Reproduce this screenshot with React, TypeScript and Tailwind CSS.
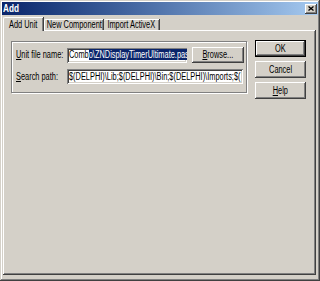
const raised =
  'shadow-[inset_-1px_-1px_#404040,inset_1px_1px_#ffffff,inset_-2px_-2px_#808080,inset_2px_2px_#d4d0c8]';
const sunken =
  'shadow-[inset_1px_1px_#808080,inset_-1px_-1px_#ffffff,inset_2px_2px_#404040,inset_-2px_-2px_#d4d0c8]';

// the screenshot is squeezed sideways, so text is narrowed with scale-x
function T({ children, center = false }: { children: React.ReactNode; center?: boolean }) {
  return (
    <span className={`inline-block whitespace-nowrap scale-x-[0.74] ${center ? 'origin-center' : 'origin-left'}`}>
      {children}
    </span>
  );
}

function Btn({ children, isDefault = false, className = '' }: { children: React.ReactNode; isDefault?: boolean; className?: string }) {
  return (
    <div className={`${isDefault ? 'border border-black' : ''} ${className}`}>
      <div className={`h-full w-full bg-[#d4d0c8] ${raised} flex items-center justify-center text-black`}>
        <T center>{children}</T>
      </div>
    </div>
  );
}

function Field({ children, className = '' }: { children: React.ReactNode; className?: string }) {
  return (
    <div className={`bg-white ${sunken} flex items-center pl-[2px] pr-[2px] overflow-hidden whitespace-nowrap ${className}`}>
      <T>{children}</T>
    </div>
  );
}

export default function App() {
  return (
    <div
      className={`w-[320px] h-[281px] bg-[#d4d0c8] p-[2px] flex flex-col shadow-[inset_-1px_-1px_#404040,inset_1px_1px_#d4d0c8,inset_-2px_-2px_#808080,inset_2px_2px_#ffffff] text-[10px] leading-none text-black font-['Liberation_Sans',Arial,sans-serif]`}
    >
      {/* title bar */}
      <div className="h-[13px] bg-gradient-to-r from-[#0a246a] to-[#a6caf0] flex items-center justify-between pl-[1px] pr-[1px]">
        <span className="inline-block text-white font-bold text-[10px] scale-x-[0.82] origin-left">Add</span>
        <div className={`w-[12px] h-[10px] bg-[#d4d0c8] ${raised} flex items-center justify-center`}>
          <svg width="6" height="5" viewBox="0 0 6 5">
            <path d="M0.5 0.5 L5.5 4.5 M5.5 0.5 L0.5 4.5" stroke="#000" strokeWidth="1.3" />
          </svg>
        </div>
      </div>

      {/* tab control */}
      <div className="flex-1 flex flex-col mt-[2px] ml-[1px] mr-[2px] mb-[4px]">
        <div className="flex items-end h-[13px] pl-[2px] relative z-10">
          <div className="w-[40px] h-[14px] -ml-[2px] mb-[-1px] border-l border-t border-white rounded-tl-[2px] shadow-[inset_-1px_0_#808080,1px_0_#404040] bg-[#d4d0c8] flex items-center justify-center">
            <T center>Add Unit</T>
          </div>
          <div className="w-[59px] h-[11px] ml-[1px] border-l border-t border-white rounded-tl-[2px] shadow-[inset_-1px_0_#808080,1px_0_#404040] flex items-center justify-center">
            <T center>New Component</T>
          </div>
          <div className="w-[55px] h-[11px] ml-[1px] border-t border-white rounded-tl-[2px] shadow-[inset_-1px_0_#808080,1px_0_#404040] flex items-center justify-center">
            <T center>Import ActiveX</T>
          </div>
        </div>
        <div className={`flex-1 bg-[#d4d0c8] ${raised} flex items-start`}>
          {/* group box */}
          <div className="ml-[8px] mt-[11px] w-[236px] h-[52px] border border-[#808080] shadow-[inset_1px_1px_#ffffff,1px_1px_#ffffff] flex flex-col pl-[4px] pt-[5px] gap-[6px]">
            <div className="flex items-center">
              <span className="w-[51px]">
                <T><u>U</u>nit file name:</T>
              </span>
              <Field className="w-[120px] h-[15px]">
                <span>Comb</span>
                <span className="bg-[#0a246a] text-white">o\ZNDisplayTimerUltimate.pas</span>
              </Field>
              <Btn className="w-[52px] h-[16px] ml-[5px]">
                <u>B</u>rowse...
              </Btn>
            </div>
            <div className="flex items-center">
              <span className="w-[51px]">
                <T><u>S</u>earch path:</T>
              </span>
              <Field className="w-[176px] h-[15px]">
                $(DELPHI)\Lib;$(DELPHI)\Bin;$(DELPHI)\Imports;$(
              </Field>
            </div>
          </div>

          {/* buttons */}
          <div className="ml-[8px] mt-[10px] w-[51px] flex flex-col gap-[4px]">
            <Btn isDefault className="h-[17px]">OK</Btn>
            <Btn className="h-[17px]">Cancel</Btn>
            <Btn className="h-[17px]">
              <u>H</u>elp
            </Btn>
          </div>
        </div>
      </div>
    </div>
  );
}
